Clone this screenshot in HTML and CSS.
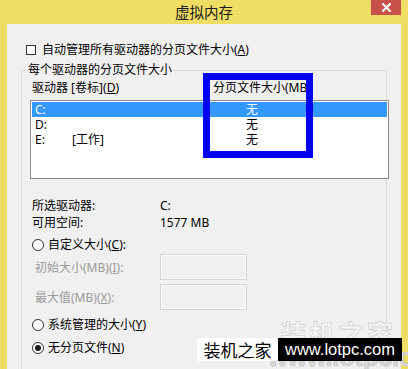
FILE: index.html
```html
<!DOCTYPE html>
<html lang="zh-CN">
<head>
<meta charset="utf-8">
<title>虚拟内存</title>
<link rel="stylesheet" href="styles.css">
</head>
<body>
<div class="window">
  <div class="titlebar">
    <span class="spacer"></span>
    <span class="title">虚拟内存</span>
    <span class="close"><svg width="9" height="9" viewBox="0 0 9 9"><path d="M1 1L8 8M8 1L1 8" stroke="#fff" stroke-width="2" stroke-linecap="square"/></svg></span>
  </div>
  <div class="client">
    <div class="auto-row"><span class="checkbox"></span><span>自动管理所有驱动器的分页文件大小(<u>A</u>)</span></div>
    <fieldset class="group">
      <legend>每个驱动器的分页文件大小</legend>
      <div class="list-header"><span class="col-drive">驱动器 [卷标](<u>D</u>)</span><span class="col-size">分页文件大小(MB)</span></div>
      <div class="list">
        <div class="row selected"><span>C:</span><span></span><span class="size">无</span></div>
        <div class="row"><span>D:</span><span></span><span class="size">无</span></div>
        <div class="row"><span>E:</span><span>[工作]</span><span class="size">无</span></div>
      </div>
      <div class="info">
        <div class="info-row"><span class="info-label">所选驱动器:</span><span>C:</span></div>
        <div class="info-row"><span class="info-label">可用空间:</span><span>1577 MB</span></div>
      </div>
      <div class="radio-row first"><span class="radio"></span><span>自定义大小(<u>C</u>):</span></div>
      <div class="field-row first"><span class="field-label">初始大小(MB)(<u>I</u>):</span><span class="textbox"></span></div>
      <div class="field-row"><span class="field-label">最大值(MB)(<u>X</u>):</span><span class="textbox"></span></div>
      <div class="radio-row second"><span class="radio"></span><span>系统管理的大小(<u>Y</u>)</span></div>
      <div class="radio-row third"><span class="radio checked"></span><span>无分页文件(<u>N</u>)</span></div>
    </fieldset>
  </div>
  <div class="annotation"></div>
  <div class="wm-faded">装机之家</div>
  <div class="wm-faded-url">www.lotpc.com</div>
  <div class="wm"><span class="wm-cn">装机之家</span><span class="wm-url">www.lotpc.com</span></div>
</div>
</body>
</html>
```
FILE: styles.css
```css
body {
  margin: 0;
}

.window {
  position: relative;
  width: 408px;
  height: 369px;
  overflow: hidden;
  background: #f0de64;
  font-family: "Noto Sans", "Noto Sans CJK SC", sans-serif;
  font-size: 12px;
  color: #000;
}

.titlebar {
  height: 24px;
  display: grid;
  grid-template-columns: 1fr auto 1fr;
}

.title {
  font-family: "Noto Sans CJK SC", sans-serif;
  font-size: 14.5px;
  line-height: 24px;
  color: #1a1a1a;
}

.close {
  justify-self: end;
  align-self: start;
  margin-right: 7px;
  width: 30px;
  height: 15px;
  background: #c7504b;
  display: flex;
  align-items: center;
  justify-content: center;
}

.close svg {
  display: block;
}

.client {
  margin: 0 7px;
  height: 345px;
  background: #f0f0f0;
  box-sizing: border-box;
  padding-top: 19px;
}

.auto-row {
  height: 14px;
  line-height: 14px;
  display: flex;
  align-items: center;
  gap: 6px;
  padding-left: 19px;
}

.checkbox {
  width: 10px;
  height: 10px;
  box-sizing: border-box;
  border: 1px solid #333;
  background: #fff;
}

u {
  text-decoration: underline;
  text-underline-offset: 1px;
}

.group {
  margin: 6px 0 0 14px;
  padding: 4px 0 0 0;
  width: 366px;
  box-sizing: border-box;
  min-width: 0;
  border: 1px solid #d9d9d9;
  height: 320px;
}

.group legend {
  margin-left: 4px;
  padding: 0 2px;
  line-height: 14px;
  height: 14px;
}

.list-header {
  display: flex;
  height: 14px;
  line-height: 14px;
}

.col-drive {
  width: 191px;
  padding-left: 10px;
  box-sizing: border-box;
}

.list {
  margin: 5px 0 0 8px;
  width: 359px;
  height: 79px;
  box-sizing: border-box;
  border: 1px solid #8a8a8a;
  padding: 1px;
  background: #fff;
}

.row {
  display: grid;
  grid-template-columns: 37px 140px 80px;
  padding-left: 3px;
  height: 15px;
  line-height: 15px;
}

.row.selected {
  background: #3399ff;
  color: #fff;
}

.size {
  text-align: center;
}

.info {
  margin-top: 18px;
}

.info-row {
  display: flex;
  height: 17px;
  line-height: 17px;
  padding-left: 10px;
}

.info-label {
  width: 128px;
}

.radio-row {
  display: flex;
  align-items: center;
  gap: 4px;
  height: 14px;
  line-height: 14px;
  padding-left: 10px;
}

.radio-row.first {
  margin-top: 7px;
}

.radio-row.second {
  margin-top: 8px;
}

.radio-row.third {
  margin-top: 9px;
}

.radio {
  width: 12px;
  height: 12px;
  box-sizing: border-box;
  border: 1px solid #333;
  border-radius: 50%;
  background: #fff;
  display: flex;
  align-items: center;
  justify-content: center;
}

.radio.checked::after {
  content: "";
  width: 6px;
  height: 6px;
  border-radius: 50%;
  background: #1a1a1a;
}

.field-row {
  display: flex;
  align-items: center;
  height: 26px;
  margin-top: 4px;
  padding-left: 13px;
  color: #9a9a9a;
}

.field-row.first {
  margin-top: 2px;
}

.field-label {
  width: 125px;
}

.textbox {
  width: 87px;
  height: 26px;
  box-sizing: border-box;
  border: 1px solid #d6d6d6;
  box-shadow: inset 0 0 0 1px #fafafa;
  background: #f0f0f0;
}

.annotation {
  position: absolute;
  left: 203px;
  top: 73px;
  width: 110px;
  height: 85px;
  box-sizing: border-box;
  border: 7px solid #0000f2;
}

.wm-faded {
  position: absolute;
  left: 280px;
  top: 318px;
  font-family: "Noto Sans CJK SC", sans-serif;
  font-weight: bold;
  font-size: 26px;
  letter-spacing: 3px;
  line-height: 30px;
  color: #f7f7f7;
  -webkit-text-stroke: 0.6px #c9c9c9;
}

.wm-faded-url {
  position: absolute;
  left: 268px;
  top: 342px;
  font-family: "Liberation Sans", sans-serif;
  font-weight: bold;
  font-size: 25px;
  line-height: 30px;
  color: #dadada;
  -webkit-text-stroke: 0.6px #b9b9b9;
}

.wm {
  position: absolute;
  left: 197px;
  top: 338px;
  height: 23px;
  display: flex;
}

.wm-cn {
  width: 81px;
  background: #fff;
  color: #000;
  font-family: "Noto Sans CJK SC", sans-serif;
  font-size: 17px;
  line-height: 23px;
  text-align: center;
}

.wm-url {
  width: 124px;
  background: #000;
  color: #fff;
  font-family: "Liberation Sans", sans-serif;
  font-size: 16.5px;
  line-height: 23px;
  text-align: center;
}
```
